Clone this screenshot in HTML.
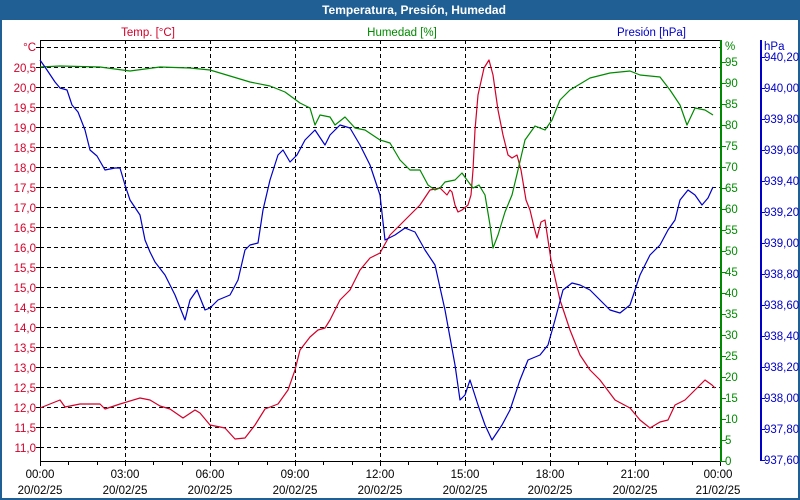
<!DOCTYPE html>
<html><head><meta charset="utf-8"><style>
html,body{margin:0;padding:0;background:#fff}
svg{display:block}
text{font-family:"Liberation Sans",sans-serif;font-size:11.5px}
</style></head><body>
<svg width="800" height="500" viewBox="0 0 800 500">
<rect x="0" y="0" width="800" height="500" fill="#1f5f94"/>
<rect x="2" y="20" width="796" height="478" fill="#fff"/>
<text x="414" y="14" fill="#fff" font-weight="bold" text-anchor="middle" style="font-size:12px">Temperatura, Presión, Humedad</text>
<text x="148" y="36" fill="#d4002a" text-anchor="middle">Temp. [°C]</text>
<text x="402" y="36" fill="#008a00" text-anchor="middle">Humedad [%]</text>
<text x="686" y="36" fill="#0000c8" text-anchor="end">Presión [hPa]</text>
<g stroke="#000" stroke-width="1" stroke-dasharray="4,3" shape-rendering="crispEdges">
<path d="M40 47.5H720M40 67.5H720M40 87.5H720M40 107.5H720M40 127.5H720M40 147.5H720M40 167.5H720M40 187.5H720M40 207.5H720M40 227.5H720M40 247.5H720M40 267.5H720M40 287.5H720M40 307.5H720M40 327.5H720M40 347.5H720M40 367.5H720M40 387.5H720M40 407.5H720M40 427.5H720M40 447.5H720"/>
<path d="M125.5 40V461M210.5 40V461M295.5 40V461M380.5 40V461M465.5 40V461M550.5 40V461M635.5 40V461"/>
</g>
<g stroke="#000" stroke-width="1" shape-rendering="crispEdges" fill="none">
<path d="M40.5 40V461.5H721M40 40.5H721"/>
<path d="M40.5 461V466M68.5 461V465M97.5 461V465M125.5 461V466M153.5 461V465M182.5 461V465M210.5 461V466M238.5 461V465M267.5 461V465M295.5 461V466M323.5 461V465M352.5 461V465M380.5 461V466M408.5 461V465M437.5 461V465M465.5 461V466M493.5 461V465M522.5 461V465M550.5 461V466M578.5 461V465M607.5 461V465M635.5 461V466M663.5 461V465M692.5 461V465M720.5 461V466"/>
<path d="M36 47.5H40M36 67.5H40M36 87.5H40M36 107.5H40M36 127.5H40M36 147.5H40M36 167.5H40M36 187.5H40M36 207.5H40M36 227.5H40M36 247.5H40M36 267.5H40M36 287.5H40M36 307.5H40M36 327.5H40M36 347.5H40M36 367.5H40M36 387.5H40M36 407.5H40M36 427.5H40M36 447.5H40"/>
</g>
<g stroke="#008a00" stroke-width="2" shape-rendering="crispEdges">
<path d="M721 40V462"/>
<path d="M721 461.5H726M721 440.5H726M721 419.5H726M721 398.5H726M721 377.5H726M721 356.5H726M721 335.5H726M721 314.5H726M721 293.5H726M721 272.5H726M721 251.5H726M721 230.5H726M721 209.5H726M721 188.5H726M721 167.5H726M721 146.5H726M721 125.5H726M721 104.5H726M721 83.5H726M721 62.5H726" stroke-width="1"/>
</g>
<g stroke="#0000c8" stroke-width="2" shape-rendering="crispEdges">
<path d="M761 40V461"/>
<path d="M761 57.5H765M761 88.5H765M761 119.5H765M761 150.5H765M761 181.5H765M761 212.5H765M761 243.5H765M761 274.5H765M761 305.5H765M761 336.5H765M761 367.5H765M761 398.5H765M761 429.5H765M761 460.5H765" stroke-width="1"/>
</g>
<g fill="#d4002a" text-anchor="end">
<text x="36" y="51">°C</text><text x="36" y="72">20,5</text><text x="36" y="92">20,0</text><text x="36" y="112">19,5</text><text x="36" y="132">19,0</text><text x="36" y="152">18,5</text><text x="36" y="172">18,0</text><text x="36" y="192">17,5</text><text x="36" y="212">17,0</text><text x="36" y="232">16,5</text><text x="36" y="252">16,0</text><text x="36" y="272">15,5</text><text x="36" y="292">15,0</text><text x="36" y="312">14,5</text><text x="36" y="332">14,0</text><text x="36" y="352">13,5</text><text x="36" y="372">13,0</text><text x="36" y="392">12,5</text><text x="36" y="412">12,0</text><text x="36" y="432">11,5</text><text x="36" y="452">11,0</text>
</g>
<g fill="#008a00">
<text x="725" y="50">%</text><text x="725" y="66">95</text><text x="725" y="87">90</text><text x="725" y="108">85</text><text x="725" y="129">80</text><text x="725" y="150">75</text><text x="725" y="171">70</text><text x="725" y="192">65</text><text x="725" y="213">60</text><text x="725" y="234">55</text><text x="725" y="255">50</text><text x="725" y="276">45</text><text x="725" y="297">40</text><text x="725" y="318">35</text><text x="725" y="339">30</text><text x="725" y="360">25</text><text x="725" y="381">20</text><text x="725" y="402">15</text><text x="725" y="423">10</text><text x="725" y="444">5</text><text x="725" y="465">0</text>
</g>
<g fill="#0000c8">
<text x="764" y="50">hPa</text><text x="764" y="61">940,20</text><text x="764" y="92">940,00</text><text x="764" y="123">939,80</text><text x="764" y="154">939,60</text><text x="764" y="185">939,40</text><text x="764" y="216">939,20</text><text x="764" y="247">939,00</text><text x="764" y="278">938,80</text><text x="764" y="309">938,60</text><text x="764" y="340">938,40</text><text x="764" y="371">938,20</text><text x="764" y="402">938,00</text><text x="764" y="433">937,80</text><text x="764" y="464">937,60</text>
</g>
<g fill="#000" text-anchor="middle">
<text x="40" y="478">00:00</text><text x="40" y="494">20/02/25</text>
<text x="125" y="478">03:00</text><text x="125" y="494">20/02/25</text>
<text x="210" y="478">06:00</text><text x="210" y="494">20/02/25</text>
<text x="295" y="478">09:00</text><text x="295" y="494">20/02/25</text>
<text x="380" y="478">12:00</text><text x="380" y="494">20/02/25</text>
<text x="465" y="478">15:00</text><text x="465" y="494">20/02/25</text>
<text x="550" y="478">18:00</text><text x="550" y="494">20/02/25</text>
<text x="635" y="478">21:00</text><text x="635" y="494">20/02/25</text>
<text x="718" y="478">00:00</text><text x="718" y="494">21/02/25</text>
</g>
<g fill="none" stroke-width="1.2" stroke-linejoin="round">
<polyline stroke="#d4002a" points="40,408 50,404 60,400 65,407 80,404 100,404 105,409 120,404 140,398 150,400 160,406 170,409 183,418 195,410 200,413 210,425 225,428 235,439 245,438 255,425 265,409 278,404 288,390 295,370 300,350 310,337 318,330 325,328 330,320 340,300 350,290 360,270 370,258 380,253 390,235 400,225 410,215 420,205 430,190 440,188 444,192 447,195 450,190 452,192 455,205 458,212 462,210 468,205 471,195 473,170 475,130 478,95 484,68 489,60 493,75 498,110 503,135 508,155 512,158 517,155 521,170 526,200 530,210 534,227 537,238 541,222 545,220 548,240 551,260 560,300 570,330 580,355 590,370 600,380 615,400 630,408 640,420 650,428 660,422 668,420 675,405 685,400 695,390 705,380 712,385 715,388"/>
<polyline stroke="#008a00" points="40,67 60,66 100,67 130,71 160,67 190,68 210,70 230,76 250,82 270,86 285,92 300,103 310,108 315,125 320,115 330,117 335,125 345,117 355,128 365,130 380,140 390,143 400,160 410,170 420,170 428,185 435,190 440,188 445,182 455,180 462,173 467,180 473,188 479,185 485,195 490,225 493,248 498,235 505,212 512,195 518,170 525,140 535,126 545,130 552,120 560,100 570,90 590,78 610,73 630,71 640,75 660,77 670,90 680,105 687,125 695,108 705,110 713,115"/>
<polyline stroke="#0000c8" points="40,60 47,70 55,82 60,88 67,90 72,105 78,112 85,130 90,150 97,156 105,170 115,168 120,168 125,185 130,200 140,215 145,240 150,252 155,262 165,275 175,295 185,320 190,300 197,290 205,310 210,308 218,300 230,295 238,280 245,250 250,245 258,243 263,210 270,180 278,155 283,150 290,162 297,155 305,140 315,130 325,145 330,135 340,125 350,128 360,145 370,165 380,195 385,240 395,235 405,228 415,232 425,250 435,265 445,310 455,365 460,400 465,395 470,380 478,405 485,425 492,440 502,425 510,410 520,380 528,360 540,355 548,345 555,320 563,290 572,283 580,285 590,290 600,300 610,310 620,313 630,305 640,275 650,255 660,245 668,230 675,220 680,200 688,190 695,195 702,205 708,198 713,187"/>
</g>
</svg>
</body></html>
